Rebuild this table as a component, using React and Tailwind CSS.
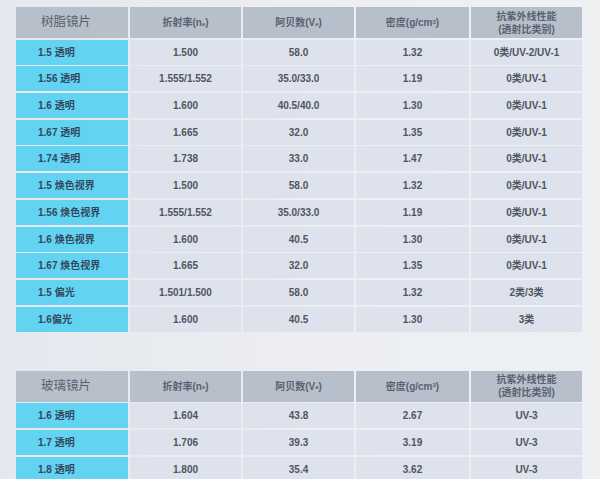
import React from "react";

const resin = [
  ["1.5 透明", "1.500", "58.0", "1.32", "0类/UV-2/UV-1"],
  ["1.56 透明", "1.555/1.552", "35.0/33.0", "1.19", "0类/UV-1"],
  ["1.6 透明", "1.600", "40.5/40.0", "1.30", "0类/UV-1"],
  ["1.67 透明", "1.665", "32.0", "1.35", "0类/UV-1"],
  ["1.74 透明", "1.738", "33.0", "1.47", "0类/UV-1"],
  ["1.5 焕色视界", "1.500", "58.0", "1.32", "0类/UV-1"],
  ["1.56 焕色视界", "1.555/1.552", "35.0/33.0", "1.19", "0类/UV-1"],
  ["1.6 焕色视界", "1.600", "40.5", "1.30", "0类/UV-1"],
  ["1.67 焕色视界", "1.665", "32.0", "1.35", "0类/UV-1"],
  ["1.5 偏光", "1.501/1.500", "58.0", "1.32", "2类/3类"],
  ["1.6偏光", "1.600", "40.5", "1.30", "3类"],
];

const glass = [
  ["1.6 透明", "1.604", "43.8", "2.67", "UV-3"],
  ["1.7 透明", "1.706", "39.3", "3.19", "UV-3"],
  ["1.8 透明", "1.800", "35.4", "3.62", "UV-3"],
];

function Header({ title }) {
  const cell = "bg-[#b6bfca] flex items-center justify-center text-[10px] font-semibold text-[#5a6170]";
  return (
    <>
      <div className="bg-[#b6bfca] flex items-center pl-[25px] text-[12.5px] text-[#585f6c]">{title}</div>
      <div className={cell}>
        折射率(n<sub className="text-[6px] relative top-[1px]">e</sub>)
      </div>
      <div className={cell}>
        阿贝数(V<sub className="text-[6px] relative top-[1px]">e</sub>)
      </div>
      <div className={cell}>
        密度(g/cm<sup className="text-[6px] relative -top-[1px]">3</sup>)
      </div>
      <div className={`${cell} flex-col leading-[13px]`}>
        <span>抗紫外线性能</span>
        <span>(透射比类别)</span>
      </div>
    </>
  );
}

function Table({ title, rows }) {
  return (
    <div className="grid grid-cols-[112px_111px_111px_113px_111px] gap-x-[2px] gap-y-[1.7px] auto-rows-[25px] [grid-template-rows:31px]">
      <Header title={title} />
      {rows.map((r) => (
        <React.Fragment key={r[0]}>
          <div className="bg-[#62d3f1] flex items-center pl-[22px] text-[10px] font-semibold text-[#33475c]">{r[0]}</div>
          {r.slice(1).map((v, i) => (
            <div key={i} className="bg-[#dde2ec] flex items-center justify-center text-[10px] font-semibold text-[#4f5561]">
              {v}
            </div>
          ))}
        </React.Fragment>
      ))}
    </div>
  );
}

export default function App() {
  return (
    <div
      className="w-[600px] h-[479px] overflow-hidden bg-gradient-to-r from-[#e5e8ee] via-[#eceef3] to-[#eef1f4] pl-[16px] pt-[7px]"
      style={{ fontFamily: '"Liberation Sans", "Noto Sans CJK SC", sans-serif' }}
    >
      <Table title="树脂镜片" rows={resin} />
      <div className="h-[39px]" />
      <Table title="玻璃镜片" rows={glass} />
    </div>
  );
}
